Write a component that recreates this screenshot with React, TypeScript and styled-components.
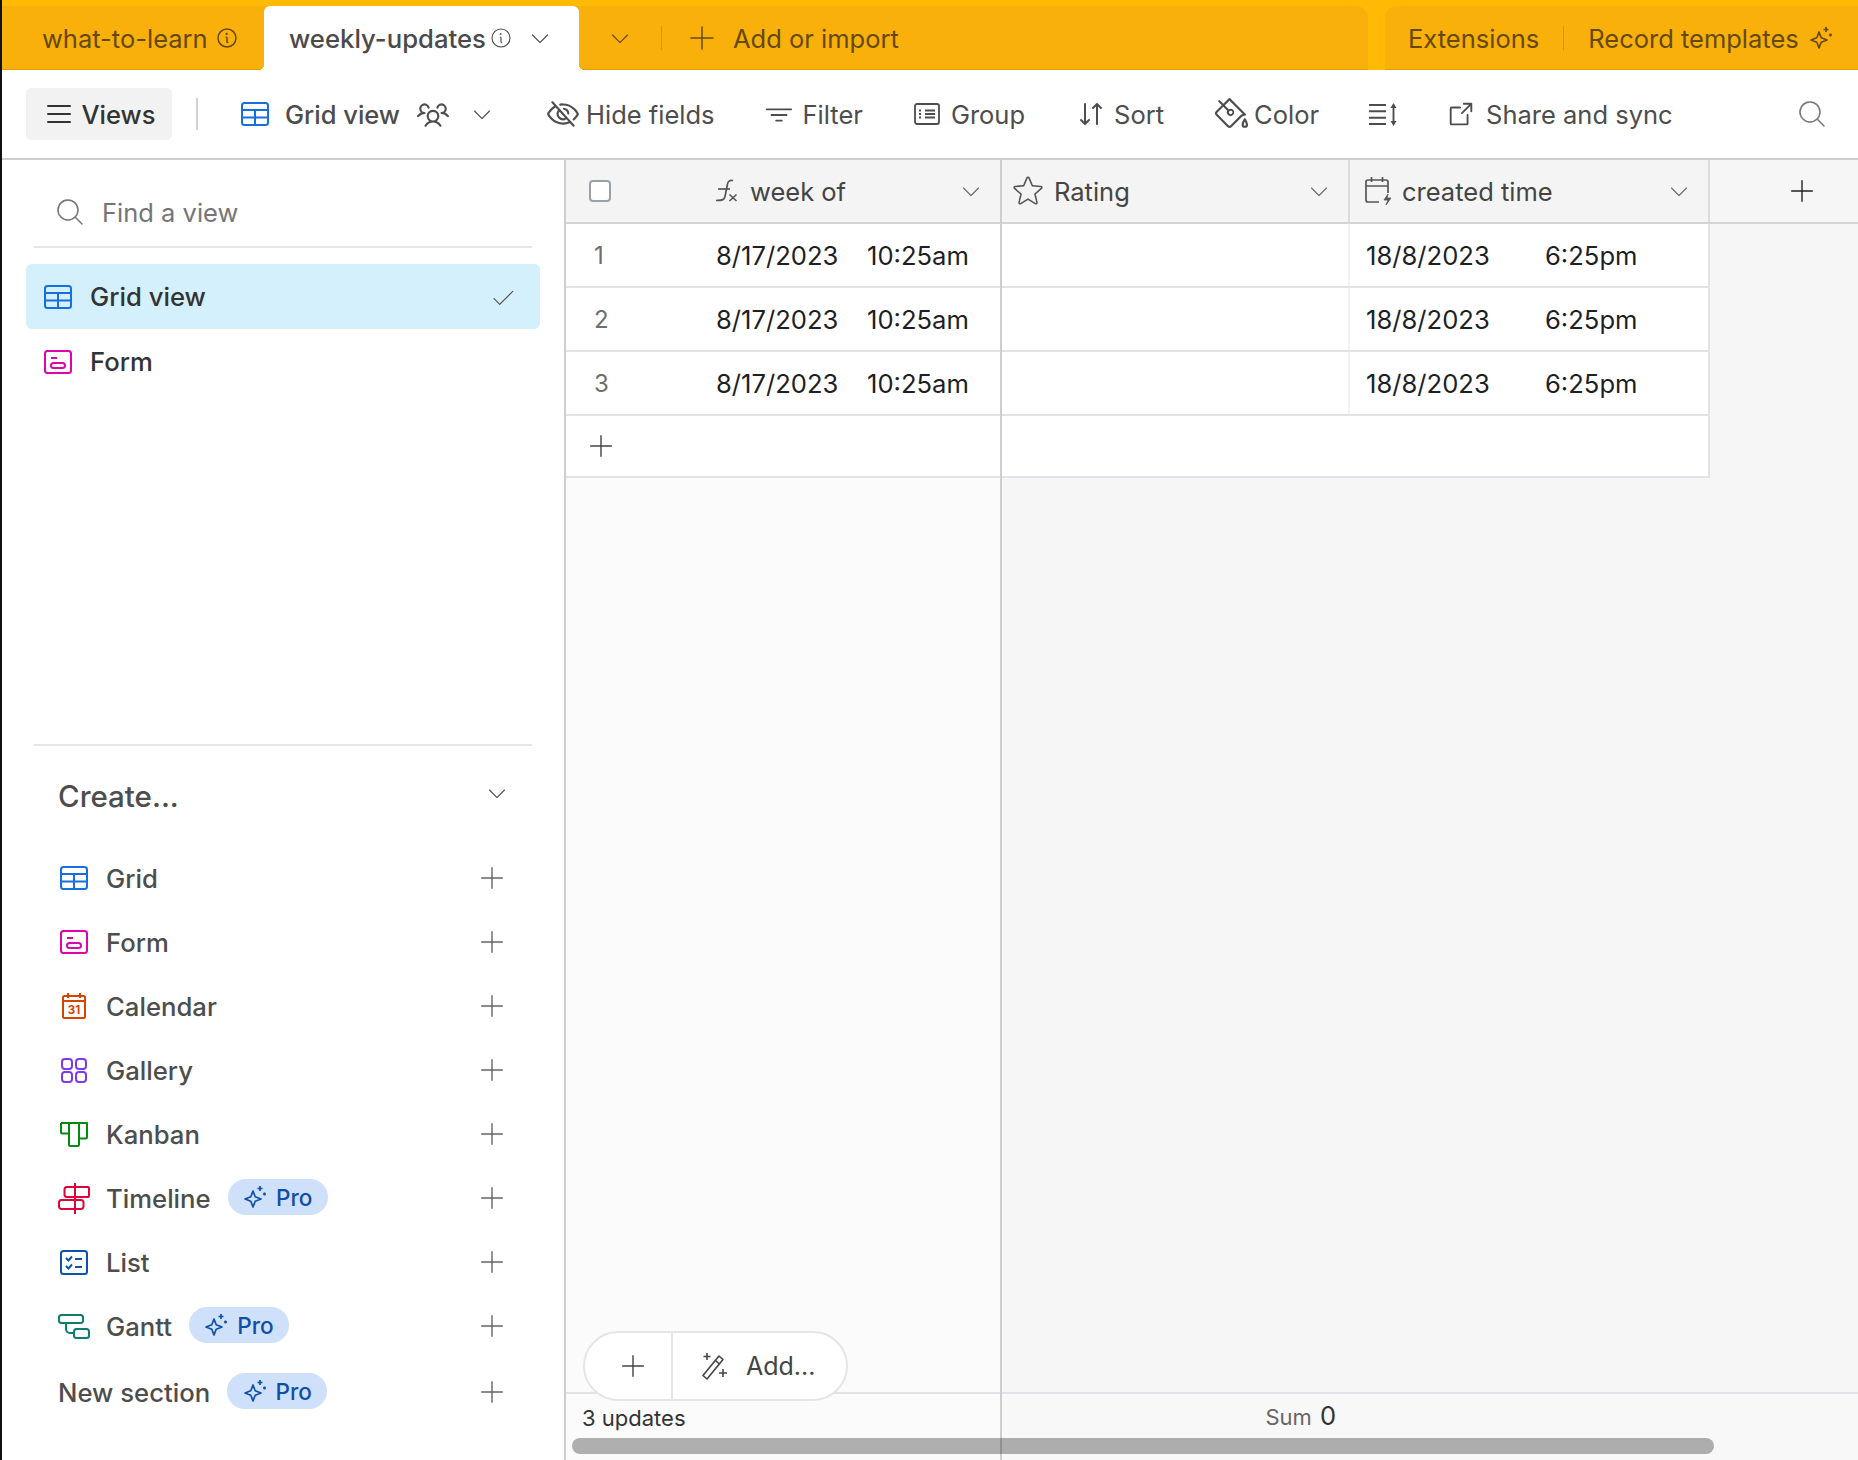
import React from 'react';
import styled, { createGlobalStyle } from 'styled-components';
import {
  PiArrowSquareOut,
  PiArrowsDownUp,
  PiCaretDownLight,
  PiCheckLight,
  PiEyeSlash,
  PiFunnelSimple,
  PiInfo,
  PiInfoLight,
  PiList,
  PiMagnifyingGlassLight,
  PiPaintBucket,
  PiPlusLight,
  PiStarLight,
  PiUsersThree,
} from 'react-icons/pi';

const GlobalStyle = createGlobalStyle`
  html, body {
    margin: 0;
    padding: 0;
    background: #fff;
    overflow: hidden;
  }
  * {
    box-sizing: border-box;
  }
  body {
    font-family: Inter, "Liberation Sans", sans-serif;
    font-size: 25.5px;
  }
`;

const Page = styled.div`
  width: 1858px;
  height: 1460px;
  display: flex;
  flex-direction: column;
  border-left: 2px solid #111;
  overflow: hidden;
`;

/* top amber bar */
const TopBar = styled.header`
  height: 70px;
  flex: none;
  display: flex;
  align-items: stretch;
  justify-content: space-between;
  padding-top: 6px;
  background: #ffba05;
  color: #65490c;
`;

const TabPanel = styled.div`
  width: 1366px;
  display: flex;
  align-items: center;
  background: #f9b00a;
  border-top-right-radius: 12px;
  box-shadow: inset 0 -2px 1px -1px rgba(0, 0, 0, 0.1);
`;

const ActionPanel = styled.div`
  width: 473px;
  display: flex;
  align-items: center;
  padding-left: 23px;
  background: #f9b00a;
  border-top-left-radius: 12px;
  box-shadow: inset 0 -2px 1px -1px rgba(0, 0, 0, 0.1);
`;

const Tab = styled.div`
  width: 262px;
  height: 100%;
  display: flex;
  align-items: center;
  gap: 7px;
  padding-left: 40px;
`;

const ActiveTab = styled.div`
  position: relative;
  width: 315px;
  height: 100%;
  display: flex;
  align-items: center;
  padding-left: 25px;
  background: #fff;
  color: #4a4a4a;
  font-size: 25.7px;
  font-weight: 500;
  border-radius: 6px 6px 0 0;

  &::before,
  &::after {
    content: '';
    position: absolute;
    bottom: 0;
    width: 6px;
    height: 6px;
  }
  &::before {
    left: -6px;
    background: radial-gradient(circle at 0 0, transparent 6px, #fff 6.5px);
  }
  &::after {
    right: -6px;
    background: radial-gradient(circle at 100% 0, transparent 6px, #fff 6.5px);
  }
`;

const TabSlot = styled.span<{ $gap?: number }>`
  display: flex;
  align-items: center;
  margin-left: ${p => p.$gap ?? 0}px;
`;

const BarSeparator = styled.span<{ $gap: number }>`
  width: 1px;
  height: 24px;
  margin: 0 ${p => p.$gap}px;
  background: rgba(0, 0, 0, 0.14);
`;

const BarLabel = styled.span`
  margin-left: 15px;
  white-space: nowrap;
`;

const ActionLabel = styled.span`
  white-space: nowrap;
`;

/* view toolbar */
const Toolbar = styled.div`
  height: 90px;
  flex: none;
  display: flex;
  align-items: center;
  gap: 48px;
  padding: 0 30px 0 24px;
  border-bottom: 2px solid #cecece;
  color: #4d4d4d;
  background: #fff;
`;

const ViewsButton = styled.div`
  width: 146px;
  height: 52px;
  margin-right: -24px;
  display: flex;
  align-items: center;
  justify-content: center;
  gap: 7px;
  background: #f2f2f2;
  border-radius: 5px;
  color: #333;
  font-weight: 500;
`;

const ToolSeparator = styled.span`
  width: 2px;
  height: 32px;
  margin-right: -5px;
  background: #d0d0d0;
`;

const ToolItem = styled.div<{ $gap?: number; $lead?: number; $strong?: boolean }>`
  display: flex;
  align-items: center;
  gap: ${p => p.$gap ?? 8}px;
  margin-left: ${p => p.$lead ?? 0}px;
  white-space: nowrap;
  font-weight: ${p => (p.$strong ? 500 : 400)};
`;

const SearchButton = styled.div`
  margin-left: auto;
  display: flex;
  color: #777;
`;

/* main area */
const Body = styled.div`
  flex: 1;
  min-height: 0;
  display: flex;
`;

const Sidebar = styled.aside`
  width: 564px;
  flex: none;
  display: flex;
  flex-direction: column;
  padding-bottom: 36px;
  border-right: 2px solid #cecece;
`;

const SearchRow = styled.div`
  height: 88px;
  margin: 0 32px;
  flex: none;
  display: flex;
  align-items: center;
  gap: 16px;
  padding: 18px 0 0 20px;
  border-bottom: 2px solid #e5e5e5;
  color: #757575;
`;

const ViewList = styled.div`
  flex: 1;
  padding: 16px 24px 0;
`;

const ViewRow = styled.div<{ $active?: boolean }>`
  height: 65px;
  display: flex;
  align-items: center;
  gap: 18px;
  padding: 0 24px 0 18px;
  border-radius: 6px;
  background: ${p => (p.$active ? '#d5f0fd' : 'transparent')};
  color: #333;
  font-size: 25.7px;
  font-weight: 500;
`;

const ViewName = styled.span`
  flex: 1;
`;

const CreateDivider = styled.div`
  height: 2px;
  margin: 0 32px;
  flex: none;
  background: #e5e5e5;
`;

const CreateHeader = styled.div`
  height: 100px;
  flex: none;
  display: flex;
  align-items: center;
  justify-content: space-between;
  padding: 0 55px 0 56px;
  color: #4d4d4d;
  font-size: 29.5px;
  font-weight: 500;
`;

const CreateChevron = styled.span`
  display: flex;
  margin-bottom: 6px;
`;

const CreateRow = styled.div<{ $section?: boolean }>`
  height: 64px;
  flex: none;
  display: flex;
  align-items: center;
  margin-top: ${p => (p.$section ? 2 : 0)}px;
  padding: 0 57px 0 56px;
  color: #4d4d4d;
  font-size: 25.7px;
  font-weight: 500;
`;

const IconSlot = styled.span`
  width: 32px;
  margin-right: 16px;
  flex: none;
  display: flex;
  justify-content: center;
`;

const PlusSlot = styled.span`
  margin-left: auto;
  display: flex;
  color: #666;
`;

const ProPill = styled.span`
  height: 36px;
  width: 100px;
  margin: 0 0 2px 17px;
  display: flex;
  align-items: center;
  justify-content: center;
  gap: 9px;
  border-radius: 18px;
  background: #cfe0fb;
  color: #0f4fa8;
  font-size: 22.5px;
`;

/* grid */
const GridArea = styled.main`
  position: relative;
  flex: 1;
  min-width: 0;
  display: flex;
`;

const Pane = styled.section<{ $left?: boolean }>`
  display: flex;
  flex-direction: column;
  width: ${p => (p.$left ? '436px' : 'auto')};
  flex: ${p => (p.$left ? 'none' : 1)};
  min-width: 0;
  background: ${p => (p.$left ? '#fbfbfb' : '#f6f6f6')};
  border-right: ${p => (p.$left ? '2px solid #cecece' : 'none')};
`;

const HeaderRow = styled.div`
  height: 64px;
  flex: none;
  display: flex;
  align-items: center;
  border-bottom: 2px solid #d4d4d4;
  color: #444;
`;

const HeaderCell = styled.div<{ $width: number; $padLeft: number }>`
  width: ${p => p.$width}px;
  height: 100%;
  flex: none;
  display: flex;
  align-items: center;
  gap: 9px;
  padding: 0 17px 0 ${p => p.$padLeft}px;
  background: #f4f4f4;
  border-right: 2px solid #dcdcdc;
`;

const LeftHeaderCell = styled.div`
  flex: 1;
  height: 100%;
  display: flex;
  align-items: center;
  padding: 0 17px 0 23px;
  background: #f4f4f4;
`;

const Checkbox = styled.span`
  width: 22px;
  height: 22px;
  margin-right: 104px;
  flex: none;
  background: #fff;
  border: 2px solid #98a1ab;
  border-radius: 4px;
`;

const FxName = styled.span`
  flex: 1;
  margin-left: 11px;
  white-space: nowrap;
`;

const ColumnName = styled.span`
  flex: 1;
  white-space: nowrap;
`;

const AddColumn = styled.div`
  flex: 1;
  display: flex;
  justify-content: center;
  padding-left: 36px;
  color: #222;
`;

const LeftRow = styled.div`
  height: 64px;
  flex: none;
  display: flex;
  align-items: center;
  padding: 1px 0 0 28px;
  background: #fff;
  border-bottom: 2px solid #e1e3e6;
  color: #1d1f25;
  font-size: 25.6px;
`;

const RowNumber = styled.span`
  width: 122px;
  flex: none;
  color: #6e6e6e;
  font-size: 24px;
`;

const RightRow = styled.div`
  width: 708px;
  height: 64px;
  flex: none;
  display: flex;
  background: #fff;
  border-bottom: 2px solid #e1e3e6;
  border-right: 2px solid #e1e3e6;
  color: #1d1f25;
  font-size: 25.6px;
`;

const EmptyCell = styled.div`
  width: 348px;
  flex: none;
  border-right: 2px solid #f1f1f1;
`;

const DateCell = styled.div`
  flex: 1;
  display: flex;
  align-items: center;
  padding: 1px 0 0 16px;
`;

const DateText = styled.span<{ $width: number }>`
  width: ${p => p.$width}px;
  flex: none;
  white-space: nowrap;
`;

const AddRow = styled.div<{ $right?: boolean }>`
  height: 62px;
  flex: none;
  display: flex;
  align-items: center;
  padding-left: 20px;
  width: ${p => (p.$right ? '708px' : 'auto')};
  background: #fff;
  border-bottom: 2px solid #e1e3e6;
  border-right: ${p => (p.$right ? '2px solid #e1e3e6' : 'none')};
  color: #444;
`;

const PaneFill = styled.div`
  flex: 1;
`;

const SummaryBar = styled.div<{ $right?: boolean }>`
  height: 68px;
  flex: none;
  display: flex;
  padding-top: 5px;
  border-top: 2px solid #e1e3e6;
  background: ${p => (p.$right ? '#f8f8f8' : '#fbfbfb')};
  font-size: 22px;
  color: #333;
`;

const SummaryCount = styled.span`
  padding: 6px 0 0 16px;
`;

const SummaryCell = styled.div`
  width: 334px;
  display: flex;
  justify-content: flex-end;
  align-items: baseline;
  gap: 8px;
  padding-top: 1px;
  color: #666;
`;

const SummaryValue = styled.span`
  color: #333;
  font-size: 25.5px;
`;

const AddPill = styled.div`
  position: absolute;
  left: 17px;
  top: 1171px;
  width: 265px;
  height: 70px;
  display: flex;
  align-items: center;
  background: #fff;
  border: 2px solid #e5e5e5;
  border-radius: 35px;
  color: #444;
  font-size: 25px;
`;

const AddPillPlus = styled.span`
  width: 88px;
  height: 100%;
  flex: none;
  display: flex;
  align-items: center;
  justify-content: center;
  padding-left: 10px;
  border-right: 2px solid #e5e5e5;
`;

const AddPillMore = styled.span`
  display: flex;
  align-items: center;
  gap: 18px;
  padding-left: 27px;
`;

const ScrollThumb = styled.div`
  position: absolute;
  left: 6px;
  bottom: 6px;
  width: 1142px;
  height: 16px;
  border-radius: 8px;
  background: rgba(0, 0, 0, 0.3);
`;

/* drawn icons */
const GridIcon = () => (
  <svg width="28" height="24" viewBox="0 0 28 24" fill="none" stroke="#166ee1" strokeWidth="2">
    <rect x="1" y="1" width="26" height="22" rx="2.5" />
    <path d="M1 8h26M1 15.5h26M14 8v15" />
  </svg>
);

const FormIcon = () => (
  <svg width="28" height="24" viewBox="0 0 28 24" fill="none" stroke="#dd04a8" strokeWidth="2">
    <rect x="1" y="1" width="26" height="22" rx="2.5" />
    <path d="M7 8h6" />
    <rect x="7" y="13" width="14" height="5" rx="2.5" />
  </svg>
);

const CalendarIcon = () => (
  <svg width="24" height="26" viewBox="0 0 24 26" fill="none" stroke="#d54401" strokeWidth="2">
    <rect x="1" y="3" width="22" height="22" rx="1.5" />
    <path d="M1 8h22M6 0v5M18 0v5" />
    <text x="12" y="21" textAnchor="middle" fill="#d54401" stroke="none" fontSize="11.5" fontWeight="700" fontFamily="Inter, sans-serif">31</text>
  </svg>
);

const GalleryIcon = () => (
  <svg width="26" height="25" viewBox="0 0 26 25" fill="none" stroke="#7c39ed" strokeWidth="2">
    <rect x="1" y="1" width="10" height="10" rx="3" />
    <rect x="15" y="1" width="10" height="10" rx="3" />
    <rect x="1" y="14" width="10" height="10" rx="3" />
    <rect x="15" y="14" width="10" height="10" rx="3" />
  </svg>
);

const KanbanIcon = () => (
  <svg width="28" height="25" viewBox="0 0 28 25" fill="none" stroke="#048a0e" strokeWidth="2" strokeLinejoin="round">
    <path d="M1 1h26v14a1.5 1.5 0 0 1-1.5 1.5H19M9 1v10.5H2.5A1.5 1.5 0 0 1 1 10V1" />
    <path d="M9 1v21.5A1.5 1.5 0 0 0 10.5 24h7a1.5 1.5 0 0 0 1.5-1.5V1" />
  </svg>
);

const TimelineIcon = () => (
  <svg width="32" height="31" viewBox="0 0 32 31" fill="none" stroke="#dc043b" strokeWidth="2">
    <path d="M17 4h13a1 1 0 0 1 1 1v8a1 1 0 0 1-1 1H9a2.5 2.5 0 0 1-2.5-2.5v-5A2.5 2.5 0 0 1 9 4z" />
    <path d="M17 17H3.5A2.5 2.5 0 0 0 1 19.5v4A2.5 2.5 0 0 0 3.5 26H23a2.5 2.5 0 0 0 2.5-2.5v-4A2.5 2.5 0 0 0 23 17z" />
    <path d="M17 0v31" />
  </svg>
);

const ListIcon = () => (
  <svg width="28" height="25" viewBox="0 0 28 25" fill="none" stroke="#0d52ac" strokeWidth="2">
    <rect x="1" y="1" width="26" height="23" rx="2.5" />
    <path d="M6 8l2.5 2.5L12 6.5M6 16l2.5 2.5L12 14.5M15 9h7M15 17h7" />
  </svg>
);

const GanttIcon = () => (
  <svg width="32" height="25" viewBox="0 0 32 25" fill="none" stroke="#0f7c71" strokeWidth="2">
    <rect x="1" y="1" width="24" height="8" rx="2.5" />
    <rect x="16" y="15" width="15" height="9" rx="2.5" />
    <path d="M8 9v6a4 4 0 0 0 4 4h4" />
  </svg>
);

const SparkleIcon = () => (
  <svg width="24" height="24" viewBox="0 0 24 24" fill="none" stroke="currentColor" strokeWidth="1.7" strokeLinejoin="round">
    <path d="M10 6l2.2 5.800L18 14l-5.800 2.200L10 22l-2.200-5.800L2 14l5.800-2.200z" />
    <path d="M17 1v5M14.5 3.5h5M21.5 7.5v3M20 9h3" />
  </svg>
);

const FxIcon = () => (
  <svg width="24" height="24" viewBox="0 0 24 24" fill="none" stroke="#555" strokeWidth="1.7">
    <path d="M18 1.5c-3-.6-5 .5-5.500 3.500L10 17.500c-.5 3-2 4-9 4" />
    <path d="M3 10h12" />
    <path d="M14.5 15.5l7 6.500M21.500 15.500l-7 6.500" />
  </svg>
);

const CreatedTimeIcon = () => (
  <svg width="28" height="29" viewBox="0 0 28 29" fill="none" stroke="#555" strokeWidth="1.7">
    <path d="M14 25H3a2 2 0 0 1-2-2V5a2 2 0 0 1 2-2h18a2 2 0 0 1 2 2v11" />
    <path d="M1 9h22M6.5 0v5M17.5 0v5" />
    <path d="M23 17l-4 6h4l-2 5 5-7h-4z" fill="#555" strokeWidth="0.8" />
  </svg>
);

const GroupIcon = () => (
  <svg width="26" height="22" viewBox="0 0 26 22" fill="none" stroke="currentColor" strokeWidth="1.8">
    <rect x="1" y="1" width="24" height="20" rx="2" />
    <path d="M5 7.5h2M5 11h2M5 14.5h2M11 7.5h10M11 11h10M11 14.5h10" />
  </svg>
);

const RowHeightIcon = () => (
  <svg width="29" height="23" viewBox="0 0 29 23" fill="none" stroke="currentColor" strokeWidth="1.9">
    <path d="M0 2h17M0 8.300h17M0 14.700h17M0 21h17" />
    <path d="M24.500 3v17" />
    <path d="M21.500 5L24.500 0l3 5zM21.500 18L24.500 23l3-5z" fill="currentColor" stroke="none" />
  </svg>
);

const WandIcon = () => (
  <svg width="28" height="28" viewBox="0 0 28 28" fill="none" stroke="#444" strokeWidth="1.6" strokeLinejoin="round">
    <path d="M19 4l4 3.500L7 27l-4-3.500z" />
    <path d="M15.500 8.500l4 3.500" />
    <path d="M7 1v7M3.500 4.500h7M23 17v8M19 21h8" />
  </svg>
);

const createItems = [
  { name: 'Grid', icon: <GridIcon /> },
  { name: 'Form', icon: <FormIcon /> },
  { name: 'Calendar', icon: <CalendarIcon /> },
  { name: 'Gallery', icon: <GalleryIcon /> },
  { name: 'Kanban', icon: <KanbanIcon /> },
  { name: 'Timeline', icon: <TimelineIcon />, pro: true },
  { name: 'List', icon: <ListIcon /> },
  { name: 'Gantt', icon: <GanttIcon />, pro: true },
];

const Pro = () => (
  <ProPill>
    <SparkleIcon />
    Pro
  </ProPill>
);

const rows = [1, 2, 3];

export default function App() {
  return (
    <>
      <GlobalStyle />
      <Page>
        <TopBar>
          <TabPanel>
            <Tab>
              what-to-learn
              <PiInfo size={24} />
            </Tab>
            <ActiveTab>
              weekly-updates
              <TabSlot $gap={3}>
                <PiInfoLight size={24} />
              </TabSlot>
              <TabSlot $gap={15}>
                <PiCaretDownLight size={24} />
              </TabSlot>
            </ActiveTab>
            <TabSlot $gap={29}>
              <PiCaretDownLight size={24} />
            </TabSlot>
            <BarSeparator $gap={29} />
            <TabSlot $gap={-5}>
              <PiPlusLight size={32} />
            </TabSlot>
            <BarLabel>Add or import</BarLabel>
          </TabPanel>
          <ActionPanel>
            <ActionLabel>Extensions</ActionLabel>
            <BarSeparator $gap={24} />
            <ActionLabel>Record templates</ActionLabel>
            <TabSlot $gap={10}>
              <SparkleIcon />
            </TabSlot>
          </ActionPanel>
        </TopBar>

        <Toolbar>
          <ViewsButton>
            <PiList size={32} />
            Views
          </ViewsButton>
          <ToolSeparator />
          <ToolItem $strong $gap={16}>
            <GridIcon />
            Grid view
            <PiUsersThree size={34} />
            <TabSlot $gap={4}>
              <PiCaretDownLight size={24} />
            </TabSlot>
          </ToolItem>
          <ToolItem $lead={4} $gap={6}>
            <PiEyeSlash size={34} />
            Hide fields
          </ToolItem>
          <ToolItem $lead={1} $gap={9}>
            <PiFunnelSimple size={30} />
            Filter
          </ToolItem>
          <ToolItem $lead={3} $gap={11}>
            <GroupIcon />
            Group
          </ToolItem>
          <ToolItem $lead={2} $gap={7}>
            <PiArrowsDownUp size={32} />
            Sort
          </ToolItem>
          <ToolItem $lead={2} $gap={6}>
            <PiPaintBucket size={34} />
            Color
          </ToolItem>
          <ToolItem $lead={2}>
            <RowHeightIcon />
          </ToolItem>
          <ToolItem $gap={10}>
            <PiArrowSquareOut size={30} />
            Share and sync
          </ToolItem>
          <SearchButton>
            <PiMagnifyingGlassLight size={32} />
          </SearchButton>
        </Toolbar>

        <Body>
          <Sidebar>
            <SearchRow>
              <PiMagnifyingGlassLight size={32} />
              Find a view
            </SearchRow>
            <ViewList>
              <ViewRow $active>
                <GridIcon />
                <ViewName>Grid view</ViewName>
                <PiCheckLight size={26} color="#555" />
              </ViewRow>
              <ViewRow>
                <FormIcon />
                <ViewName>Form</ViewName>
              </ViewRow>
            </ViewList>
            <CreateDivider />
            <CreateHeader>
              Create...
              <CreateChevron>
                <PiCaretDownLight size={24} />
              </CreateChevron>
            </CreateHeader>
            {createItems.map(item => (
              <CreateRow key={item.name}>
                <IconSlot>{item.icon}</IconSlot>
                {item.name}
                {item.pro && <Pro />}
                <PlusSlot>
                  <PiPlusLight size={30} />
                </PlusSlot>
              </CreateRow>
            ))}
            <CreateRow $section>
              New section
              <Pro />
              <PlusSlot>
                <PiPlusLight size={30} />
              </PlusSlot>
            </CreateRow>
          </Sidebar>

          <GridArea>
            <Pane $left>
              <HeaderRow>
                <LeftHeaderCell>
                  <Checkbox />
                  <FxIcon />
                  <FxName>week of</FxName>
                  <PiCaretDownLight size={24} color="#666" />
                </LeftHeaderCell>
              </HeaderRow>
              {rows.map(n => (
                <LeftRow key={n}>
                  <RowNumber>{n}</RowNumber>
                  <DateText $width={151}>8/17/2023</DateText>
                  <DateText $width={110}>10:25am</DateText>
                </LeftRow>
              ))}
              <AddRow>
                <PiPlusLight size={30} />
              </AddRow>
              <PaneFill />
              <SummaryBar>
                <SummaryCount>3 updates</SummaryCount>
              </SummaryBar>
            </Pane>
            <Pane>
              <HeaderRow>
                <HeaderCell $width={348} $padLeft={9}>
                  <PiStarLight size={34} color="#555" />
                  <ColumnName>Rating</ColumnName>
                  <PiCaretDownLight size={24} color="#666" />
                </HeaderCell>
                <HeaderCell $width={360} $padLeft={15}>
                  <CreatedTimeIcon />
                  <ColumnName>created time</ColumnName>
                  <PiCaretDownLight size={24} color="#666" />
                </HeaderCell>
                <AddColumn>
                  <PiPlusLight size={30} />
                </AddColumn>
              </HeaderRow>
              {rows.map(n => (
                <RightRow key={n}>
                  <EmptyCell />
                  <DateCell>
                    <DateText $width={179}>18/8/2023</DateText>
                    <DateText $width={110}>6:25pm</DateText>
                  </DateCell>
                </RightRow>
              ))}
              <AddRow $right />
              <PaneFill />
              <SummaryBar $right>
                <SummaryCell>
                  Sum
                  <SummaryValue>0</SummaryValue>
                </SummaryCell>
              </SummaryBar>
            </Pane>
            <AddPill>
              <AddPillPlus>
                <PiPlusLight size={30} />
              </AddPillPlus>
              <AddPillMore>
                <WandIcon />
                Add...
              </AddPillMore>
            </AddPill>
            <ScrollThumb />
          </GridArea>
        </Body>
      </Page>
    </>
  );
}
